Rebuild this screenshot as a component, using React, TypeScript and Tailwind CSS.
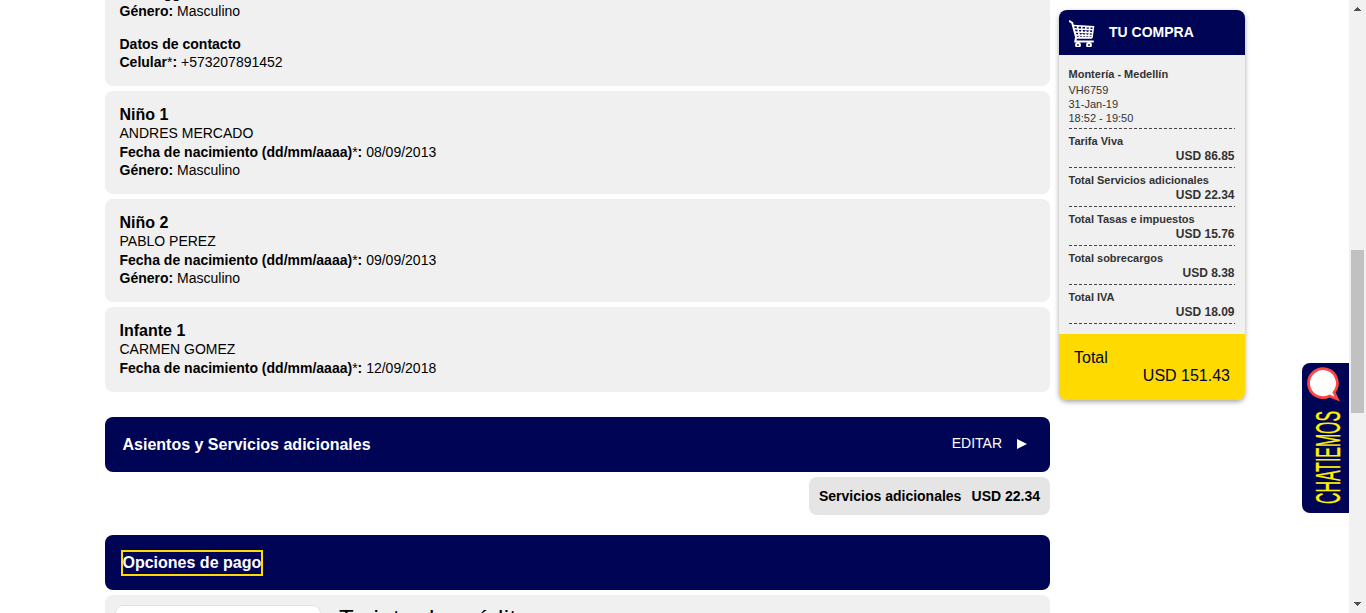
import React from "react";

const passengers = [
  { title: "Niño 1", name: "ANDRES MERCADO", birth: "08/09/2013", gender: "Masculino" },
  { title: "Niño 2", name: "PABLO PEREZ", birth: "09/09/2013", gender: "Masculino" },
  { title: "Infante 1", name: "CARMEN GOMEZ", birth: "12/09/2018", gender: "" },
];

const charges = [
  ["Tarifa Viva", "USD 86.85"],
  ["Total Servicios adicionales", "USD 22.34"],
  ["Total Tasas e impuestos", "USD 15.76"],
  ["Total sobrecargos", "USD 8.38"],
  ["Total IVA", "USD 18.09"],
];

function Field({ label, star, value }: { label: string; star?: boolean; value: string }) {
  return (
    <p className="h-[18px] leading-[18px] whitespace-nowrap">
      <b>{label}</b>
      {star && "*"}
      <b>:</b> {value}
    </p>
  );
}

function Dashes() {
  return (
    <svg className="block h-px w-[167px]" viewBox="0 0 167 1">
      <line x1="0" y1="0.5" x2="166" y2="0.5" stroke="#444" strokeDasharray="3 2" shapeRendering="crispEdges" />
    </svg>
  );
}

function Cart() {
  return (
    <svg className="h-[28px] w-[26px]" viewBox="0 0 26 28" fill="none" stroke="#fff">
      <path d="M0.5 2.2L3.2 3.8L7.2 18.8H22.5" strokeWidth="2" strokeLinecap="round" />
      <path d="M7 18.8L6.3 22.6H24" strokeWidth="2" strokeLinecap="round" />
      <path d="M4 6.6L24.5 7.8L23 18.6M4.8 9.8L24 10.8M5.6 12.9L23.4 13.8M6.4 15.9L23 16.4M8.5 6.8L10.5 18.5M12.6 7L13.7 18.5M16.7 7.2V18.5M20.8 7.4L19.8 18.5" strokeWidth="1.5" />
      <circle cx="9" cy="26" r="1.9" strokeWidth="2" />
      <circle cx="20" cy="26" r="1.9" strokeWidth="2" />
    </svg>
  );
}

export default function App() {
  return (
    <div className="flex h-[613px] w-[1366px] overflow-hidden bg-white pl-[105px] font-['Liberation_Sans',Arial,sans-serif] text-sm text-black">
      <main className="flex h-[613px] w-[945px] shrink-0 flex-col overflow-hidden">
        <section className="flex h-[86px] shrink-0 flex-col justify-end rounded-b-lg bg-[#f0f0f0] pb-[15px] pl-[14.5px]">
          <p className="h-[18px] pl-[44px] leading-[18px] font-bold">gg</p>
          <Field label="Género" value="Masculino" />
          <p className="mt-[15px] h-[18px] leading-[18px] font-bold">Datos de contacto</p>
          <Field label="Celular" star value="+573207891452" />
        </section>
        {passengers.map((p) => (
          <section key={p.title} className="mt-[5px] shrink-0 rounded-lg bg-[#f0f0f0] pt-[14px] pb-[15px] pl-[14.5px]">
            <h3 className="h-[19px] text-base leading-[19px] font-bold">{p.title}</h3>
            <p className="mb-px h-[18px] leading-[18px]">{p.name}</p>
            <Field label="Fecha de nacimiento (dd/mm/aaaa)" star value={p.birth} />
            {p.gender && <Field label="Género" value={p.gender} />}
          </section>
        ))}
        <header className="mt-[25px] flex h-[55px] shrink-0 items-center rounded-lg bg-[#000455] pr-[19px] pl-[17.5px] text-white">
          <h2 className="flex-1 text-base font-bold">Asientos y Servicios adicionales</h2>
          <span className="mb-[4px]">EDITAR</span>
          <svg className="mb-px ml-[15px] h-[10px] w-[10px]" viewBox="0 0 10 10" fill="#fff">
            <path d="M0 0L10 5L0 10Z" />
          </svg>
          <span className="w-1 text-black">.</span>
        </header>
        <div className="mt-[5px] flex h-[38px] w-[241px] shrink-0 items-center justify-between self-end rounded-lg bg-[#e5e5e5] px-[10px] font-bold whitespace-nowrap">
          <span>Servicios adicionales</span>
          <span>USD 22.34</span>
        </div>
        <header className="mt-[20px] flex h-[55px] shrink-0 items-center rounded-lg bg-[#000455] pl-4 text-white">
          <h2 className="h-[26px] w-[142px] border-2 border-[#ffda00] text-base leading-[22px] font-bold whitespace-nowrap">
            <span className="-ml-[0.5px]">Opciones de pago</span>
          </h2>
        </header>
        <section className="mt-[5px] flex h-[120px] shrink-0 rounded-lg bg-[#f0f0f0] pt-[10px] pl-[10px]">
          <div className="h-[100px] w-[206px] rounded-lg border border-[#e2e2e2] bg-white" />
          <h3 className="ml-[18px] text-2xl leading-7 tracking-[0.4px]">Tarjeta de crédito</h3>
        </section>
      </main>

      <aside className="mt-[10px] ml-[9px] h-[390px] w-[186px] shrink-0 overflow-hidden rounded-lg bg-[#f0f0f0] text-[#333] shadow-[0_2px_5px_rgba(0,0,0,0.35)]">
        <div className="flex h-[45px] items-center bg-[#000455] pl-[10px] text-white">
          <Cart />
          <b className="mb-[2px] ml-[14px]">TU COMPRA</b>
        </div>
        <div className="h-[279px] pt-[12px] pl-[9.5px] text-[11px]">
          <p className="h-[16px] leading-[14px] font-bold">Montería - Medellín</p>
          <p className="h-[14px] leading-[14px]">VH6759</p>
          <p className="h-[14px] leading-[14px]">31-Jan-19</p>
          <p className="h-[17px] leading-[14px]">18:52 - 19:50</p>
          <Dashes />
          {charges.map(([label, amount]) => (
            <div key={label} className="w-[167px] font-bold">
              <p className="h-[20px] pt-[5px] leading-[15px]">{label}</p>
              <p className="h-[18px] pr-px text-right text-xs leading-[15px]">{amount}</p>
              <Dashes />
            </div>
          ))}
        </div>
        <div className="h-[66px] bg-[#ffda00] px-[15px] pt-[15px] text-base leading-[18px] text-[#000433]">
          <p>Total</p>
          <p className="text-right">USD 151.43</p>
        </div>
      </aside>

      <button className="mt-[363px] ml-[57px] flex h-[150px] w-[47px] shrink-0 flex-col items-center rounded-l-lg bg-[#000455]">
        <svg className="h-full w-full" viewBox="0 0 47 150">
          <path d="M32.8 29.4A14.4 14.4 0 1 0 28.3 33L36 36L32.8 29.4Z" transform="translate(-0.8 0)" fill="#fff" stroke="#ff4646" strokeWidth="2.8" />
          <text
            transform="translate(38 141) rotate(-90)"
            textLength="93"
            lengthAdjust="spacingAndGlyphs"
            fill="#fff200"
            stroke="#fff200"
            strokeWidth="0.3"
            fontSize="35"
            fontFamily="Liberation Sans Narrow, Liberation Sans, sans-serif"
          >
            CHATIEMOS
          </text>
        </svg>
      </button>
      <div className="flex h-full w-[17px] shrink-0 flex-col items-center bg-[#f1f1f1]">
        <svg className="mt-[7px] h-1 w-[7px]" viewBox="0 0 7 4" fill="#505050" shapeRendering="crispEdges">
          <path d="M3 0h1v1h1v1h1v1h1v1H0V3h1V2h1V1h1Z" />
        </svg>
        <div className="mt-[239px] h-[163px] w-[13px] bg-[#c1c1c1]" />
        <svg className="mt-auto mb-[7px] h-1 w-[7px]" viewBox="0 0 7 4" fill="#505050" shapeRendering="crispEdges">
          <path d="M0 0h7v1H6v1H5v1H4v1H3V3H2V2H1V1H0Z" />
        </svg>
      </div>
    </div>
  );
}
